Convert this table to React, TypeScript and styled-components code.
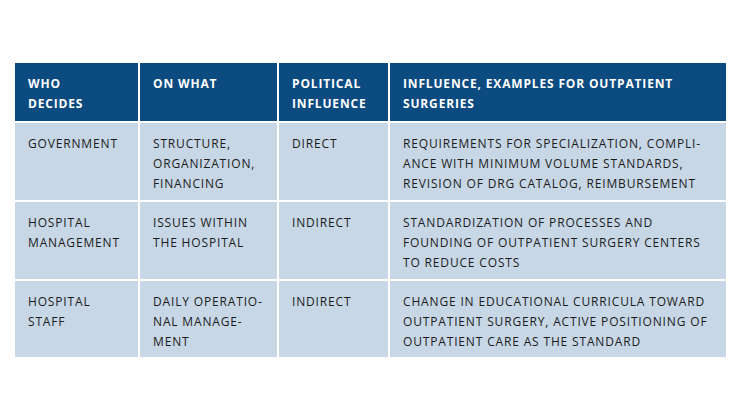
import React from "react";
import styled, { createGlobalStyle } from "styled-components";

const Global = createGlobalStyle`
  html, body { margin: 0; padding: 0; background: #ffffff; }
  body { font-family: "Open Sans", "Noto Sans", Arial, sans-serif; }
`;

const Page = styled.div`
  width: 733px;
  height: 414px;
  padding: 63px 0 0 15px;
  box-sizing: border-box;
`;

const Table = styled.div`
  display: grid;
  grid-template-columns: 123px 137px 109px 336px;
  grid-template-rows: 58px 77px 77px 76px;
  gap: 2px;
  width: 711px;
  background: #ffffff;
`;

const Cell = styled.div<{ $head?: boolean }>`
  background: ${(p) => (p.$head ? "#0b4b7f" : "#c7d7e6")};
  color: ${(p) => (p.$head ? "#ffffff" : "#1c1c1c")};
  font-weight: ${(p) => (p.$head ? 700 : 500)};
  font-size: 12px;
  letter-spacing: 0.07em;
  line-height: 20px;
  padding: 11px 0 0 13px;
  box-sizing: border-box;
  overflow: hidden;
`;

const Line = styled.span`
  display: block;
  white-space: nowrap;
`;

type Row = string[][];

const header: Row = [
  ["WHO", "DECIDES"],
  ["ON WHAT"],
  ["POLITICAL", "INFLUENCE"],
  ["INFLUENCE, EXAMPLES FOR OUTPATIENT", "SURGERIES"],
];

const rows: Row[] = [
  [
    ["GOVERNMENT"],
    ["STRUCTURE,", "ORGANIZATION,", "FINANCING"],
    ["DIRECT"],
    [
      "REQUIREMENTS FOR SPECIALIZATION, COMPLI-",
      "ANCE WITH MINIMUM VOLUME STANDARDS,",
      "REVISION OF DRG CATALOG, REIMBURSEMENT",
    ],
  ],
  [
    ["HOSPITAL", "MANAGEMENT"],
    ["ISSUES WITHIN", "THE HOSPITAL"],
    ["INDIRECT"],
    [
      "STANDARDIZATION OF PROCESSES AND",
      "FOUNDING OF OUTPATIENT SURGERY CENTERS",
      "TO REDUCE COSTS",
    ],
  ],
  [
    ["HOSPITAL", "STAFF"],
    ["DAILY OPERATIO-", "NAL MANAGE-", "MENT"],
    ["INDIRECT"],
    [
      "CHANGE IN EDUCATIONAL CURRICULA TOWARD",
      "OUTPATIENT SURGERY, ACTIVE POSITIONING OF",
      "OUTPATIENT CARE AS THE STANDARD",
    ],
  ],
];

export default function App() {
  return (
    <>
      <Global />
      <Page>
        <Table>
          {header.map((c, i) => (
            <Cell $head key={`h${i}`}>
              {c.map((l, j) => (
                <Line key={j}>{l}</Line>
              ))}
            </Cell>
          ))}
          {rows.map((r, ri) =>
            r.map((c, ci) => (
              <Cell key={`r${ri}c${ci}`}>
                {c.map((l, j) => (
                  <Line key={j}>{l}</Line>
                ))}
              </Cell>
            ))
          )}
        </Table>
      </Page>
    </>
  );
}
